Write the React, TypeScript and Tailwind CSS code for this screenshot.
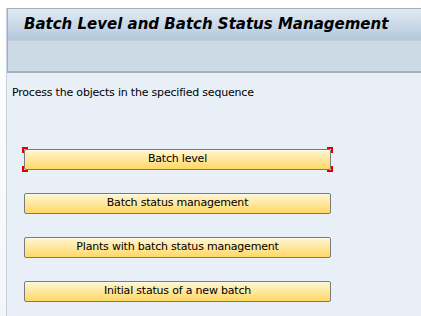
import React from "react";

const actions = [
  "Batch level",
  "Batch status management",
  "Plants with batch status management",
  "Initial status of a new batch",
];

function FocusFrame() {
  return (
    <>
      <span className="absolute -left-[2px] -top-[2px] h-[6px] w-[6px] border-l-2 border-t-2 border-[#e00000]" />
      <span className="absolute -left-[2px] -bottom-[2px] h-[6px] w-[6px] border-l-2 border-b-2 border-[#e00000]" />
      <span className="absolute -right-[2px] -top-[2px] h-[6px] w-[6px] border-r-2 border-t-2 border-[#e00000]" />
      <span className="absolute -right-[2px] -bottom-[2px] h-[6px] w-[6px] border-r-2 border-b-2 border-[#e00000]" />
    </>
  );
}

export default function App() {
  return (
    <div
      className="h-[316px] w-[421px] overflow-hidden bg-gradient-to-b from-white to-[#f3f6f9] pt-[8px] pl-[6px]"
      style={{ fontFamily: "Tahoma, 'DejaVu Sans', sans-serif" }}
    >
      <div className="flex h-full flex-col border-l border-[#c9d2dc]">
        <div className="border-l border-t border-[#9fb1c3]">
          <div className="flex h-[32px] items-center border-b border-[#c0cedb] bg-gradient-to-b from-[#e2eaf2] to-[#b2c8dd] pl-[16px]">
            <h1
              className="whitespace-nowrap text-[15px] font-bold italic text-black"
              style={{ fontFamily: "Verdana, 'DejaVu Sans', sans-serif" }}
            >
              Batch Level and Batch Status Management
            </h1>
          </div>
          <div className="h-[32px] border-b-2 border-[#a3b2c1] bg-[#ccdae6]" />
        </div>
        <div className="flex-1 bg-[#e8eff6] pl-[5px] pt-[13px]">
          <p className="text-[11px] leading-[14px] tracking-[-0.2px] text-black">
            Process the objects in the specified sequence
          </p>
          <div className="mt-[49px] flex flex-col gap-[23px] pl-[12px]">
            {actions.map((label, i) => (
              <div key={label} className="relative w-[307px]">
                <button className="flex h-[21px] w-full items-center justify-center rounded-[2px] border border-[#7a7a7a] bg-gradient-to-b from-[#fff6cf] to-[#ffd763] text-[11px] tracking-[-0.2px] text-black shadow-[inset_0_1px_0_#fffbe6]">
                  {label}
                </button>
                {i === 0 && <FocusFrame />}
              </div>
            ))}
          </div>
        </div>
      </div>
    </div>
  );
}
